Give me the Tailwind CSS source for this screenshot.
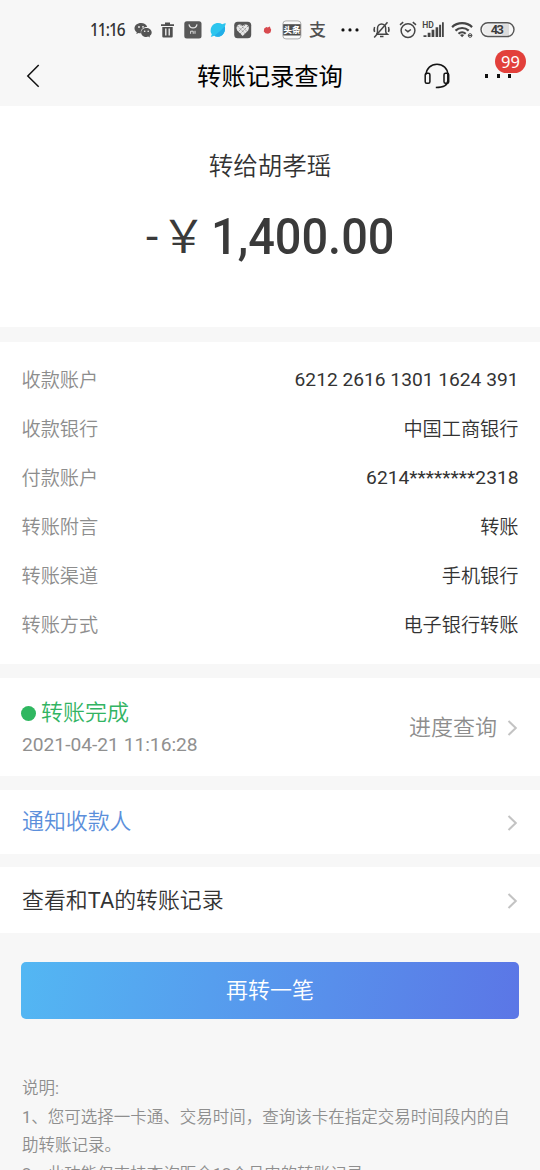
<!DOCTYPE html>
<html lang="zh-CN">
<head>
<meta charset="utf-8">
<title>转账记录查询</title>
<script src="https://cdn.jsdelivr.net/npm/@tailwindcss/browser@4"></script>
</head>
<body class="w-[540px] h-[1170px] overflow-hidden bg-[#f7f7f7] font-[Roboto,'Noto_Sans_CJK_SC_DemiLight','Noto_Sans_CJK_SC_Light','Noto_Sans_CJK_SC',sans-serif] text-[#333] flex flex-col">
<!-- status bar -->
<div class="h-[46px] shrink-0 pt-[14px] flex items-center pl-[90px] text-[#484848]">
  <span class="w-[44px] shrink-0"><span class="inline-block origin-left scale-x-[0.88] font-['Noto_Sans',sans-serif] font-medium text-[17.500px] tracking-[-1.100px] leading-8 text-[#333] whitespace-nowrap -mt-[2px]">11:16</span></span>
  <svg class="w-[18px] h-5 shrink-0" viewBox="0 0 18 20" fill="#555"><path d="M7 3C3.3 3 .5 5.3.5 8.200c0 1.700.9 3 2.300 4L2.300 14l2.300-1.100q1.200.35 2.300.3C6.300 9.500 9.300 7 13.200 7 12.500 4.600 10 3 7 3z"/><path d="M12.400 7.900c-3 0-5.300 2-5.300 4.500s2.300 4.500 5.300 4.500q.9 0 1.800-.3l1.800 1-.4-1.600c1.300-.9 2.100-2.100 2.100-3.600 0-2.500-2.400-4.500-5.300-4.500z"/><g fill="#f7f7f7"><circle cx="5" cy="7" r=".9"/><circle cx="9" cy="6.800" r=".9"/><circle cx="10.700" cy="11.200" r=".8"/><circle cx="14.200" cy="11.200" r=".8"/></g></svg>
  <svg class="w-[15px] h-5 ml-[8px] shrink-0" viewBox="0 0 15 20" fill="#505050"><path d="M1 4.200h4V2.500h5v1.700h4V6H1zM2.300 7h10.400v9.500q0 1-1 1H3.300q-1 0-1-1z"/><path d="M5.800 8.500v7M9.200 8.500v7" stroke="#f7f7f7" stroke-width="1.300"/></svg>
  <svg class="w-[18px] h-5 ml-[9px] shrink-0" viewBox="0 0 18 20"><rect x=".3" y="1.200" width="17.200" height="17.200" rx="2.500" fill="#585858"/><path d="M5 4.300q.5 3.600 4 3.600t4-3.600" fill="none" stroke="#e8e8e8" stroke-width="1.200"/><path d="M6.600 13.800v-2.600h2.600v2.600M11 10.800v3" fill="none" stroke="#ddd"/></svg>
  <svg class="w-[16px] h-5 ml-[8px] shrink-0" viewBox="0 0 16 20"><path d="M15.600 2.900q.2 1.600-.8 3.400C16 11.300 13 16.700 8 16.700q-2.300 0-3.700-1L.8 17l1-2.800C.6 12.600.5 11.500.7 9.700 1 5.600 4.500 3 8 3q2.700 0 4.200 1.200z" fill="#2cc5ee"/><path d="M14.800 6.300Q10 12 4.300 15.700q1.400 1 3.700 1c5 0 8-5.400 6.800-10.400" fill="#22aee8"/></svg>
  <svg class="w-[18px] h-5 ml-[8px] shrink-0" viewBox="0 0 18 20"><rect x=".2" y="1.700" width="17" height="16.600" rx="3.500" fill="#565656"/><path d="M8.700 16 3.200 10.500Q1.700 8 3 5.900 5.700 3.300 8.700 6q3-2.700 5.700-.1 1.300 2.100-.2 4.600z" fill="#e7e7e7"/><path d="m3.500 6 8 8M6.500 5l6.500 6.500M14 6l-8 8M11 5l-6.500 6.500" stroke="#777" stroke-width=".8" stroke-dasharray="1.500 1"/></svg>
  <svg class="w-[9px] h-5 ml-[11px] shrink-0" viewBox="0 0 9 20"><path d="M1.200 8.500 3.400 7l1.300.6L6.900 6.400l.5 1.800.8 1.600-.7 2.600-2.400 1.300-2.700-.4L.8 11.500z" fill="#d84a4f"/></svg>
  <svg class="w-[20px] h-5 ml-[10px] shrink-0" viewBox="0 0 20 20"><rect x=".9" y=".9" width="18" height="18" rx="3" fill="#fafafa" stroke="#999" stroke-width=".8"/><rect x="1.200" y="4.200" width="17.400" height="11.300" fill="#4d4d4d"/><text x="9.900" y="13.200" text-anchor="middle" font-size="8.500" font-weight="900" font-family="Noto Sans CJK SC" fill="#fff">头条</text></svg>
  <span class="w-[18px] ml-[7px] shrink-0 font-['Noto_Sans_CJK_SC'] font-medium text-[17px] leading-5 text-[#505050] -mt-[2px]">支</span>
  <svg class="w-[20px] h-5 ml-[13px] shrink-0" viewBox="0 0 20 20" fill="#111"><circle cx="3" cy="9.900" r="1.600"/><circle cx="10" cy="9.900" r="1.600"/><circle cx="17" cy="9.900" r="1.600"/></svg>
  <svg class="w-[19px] h-5 ml-[12px] shrink-0" viewBox="0 0 19 20" fill="none" stroke="#454545" stroke-width="1.500"><path d="M4.500 14.200h10.700q-1.500-1.200-1.500-3V8.500c0-2.500-1.700-4.400-4.100-4.400S5.500 6 5.500 8.500v2.700q0 1.800-1 3M8 16.600h3.500M2.600 7q-1 2.500 0 5M16.500 7q1 2.500 0 5"/><path d="M2.200 17.500 15.500 2.200"/></svg>
  <svg class="w-[18px] h-5 ml-[8px] shrink-0" viewBox="0 0 18 20" fill="none" stroke="#454545" stroke-width="1.500"><circle cx="9" cy="10.600" r="6.900"/><path d="m1 4.800 3.200-2.600M17 4.800l-3.200-2.600M6 9.500l2.900 2.200 3-2.200"/></svg>
  <svg class="w-[23px] h-5 ml-[5px] shrink-0" viewBox="0 0 23 20" fill="#454545"><text x=".3" y="8" font-size="8.500" font-weight="600" font-family="Roboto" textLength="11.500">HD</text><path d="M1.500 15.200h3v1.900h-3zM5.700 12.800h2.800v4.300H5.700zM9.600 9.800h2.700v7.300H9.600zM13.600 7.300h2.600v9.800h-2.600zM17.100 4.700h2v12.400h-2zM20 2.200h1.800v14.900H20z"/></svg>
  <svg class="w-[23px] h-5 ml-[6px] shrink-0" viewBox="0 0 23 20" fill="none" stroke="#454545" stroke-width="2.200"><path d="M1.100 7.100c5.500-5.200 14.500-5.200 20 0M4.500 10.600c3.800-3.500 9.400-3.500 13.200 0M7.500 13.700c2.100-1.900 5.100-1.900 7.200 0"/><path d="m9 15 2.100 2.300 2.100-2.300q-2.100-1.500-4.200 0z" fill="#454545" stroke="none"/><circle cx="19.100" cy="15.500" r="1.800" stroke-width="1"/><path d="M17.300 15.500h3.500" stroke-width="1"/></svg>
  <svg class="w-[36px] h-5 ml-[6px] shrink-0" viewBox="0 0 36 20"><rect x="1" y="2.700" width="33" height="13.800" rx="6.900" fill="#f7f7f7" stroke="#555" stroke-width="1.400"/><path d="M8.500 4.200h16v10.800h-16q-5.500-1-5.500-5.400t5.500-5.400" fill="#ececec"/><path d="M22 4.200h7v10.800h-7z" fill="#dcdcdc"/><text x="17.300" y="14.200" text-anchor="middle" font-size="12.800" font-weight="700" font-family="Roboto" fill="#3c3c3c" textLength="13">43</text></svg>
</div>
<!-- title bar -->
<header class="h-[60px] shrink-0 relative flex items-center justify-between pl-[25px] pr-[29px]">
  <svg class="w-[16px] h-6" viewBox="0 0 16 24" fill="none" stroke="#111" stroke-width="1.500"><path d="M13.700 1 2.800 12l10.900 10.800"/></svg>
  <h1 class="absolute left-0 top-[13px] w-full text-center font-['Noto_Sans_CJK_SC'] text-[24.300px] font-normal text-black leading-8">转账记录查询</h1>
  <div class="flex items-center">
    <svg class="w-[26px] h-[26px] mr-[35px]" viewBox="0 0 26 26" fill="none" stroke="#151515" stroke-width="1.500"><path d="M2.200 11.500C2.200 5.500 7 1.300 13 1.300s10.800 4.200 10.800 10.200v6c0 4.500-4 7-12 7"/><rect x="1.200" y="10.300" width="4.700" height="10" rx="1.500"/><rect x="20" y="10.300" width="4.700" height="10" rx="1.500"/></svg>
    <div class="relative w-[26px] h-1 flex justify-between"><i class="w-[3px] h-1 bg-[#111]"></i><i class="w-[3px] h-1 bg-[#111]"></i><i class="w-[3px] h-1 bg-[#111]"></i>
      <span class="absolute left-[10px] -top-[24px] w-[31px] h-[23px] rounded-full bg-[#e2403b] text-white text-center font-['Noto_Sans',sans-serif] text-[16.500px] leading-[23px]">99</span>
    </div>
  </div>
</header>
<section class="h-[221px] shrink-0 bg-white flex flex-col items-center">
  <p class="mt-[43px] text-[24.500px] leading-9">转给胡孝瑶</p>
  <div class="mt-[22px] h-[60px] w-[248px] flex items-center text-[#3a3a3a] leading-[60px] whitespace-nowrap">
    <span class="w-[15px] shrink-0 text-[44px] font-normal">-</span><span class="w-[45px] shrink-0 font-['Noto_Sans_CJK_SC'] text-[45px] -mt-[7px]">￥</span><span class="ml-[5px] origin-left scale-x-[0.938] text-[50px] font-medium">1,400.00</span>
  </div>
</section>
<section class="mt-[15px] h-[322px] shrink-0 bg-white px-[21.500px] pt-[14px] text-[19.200px] *:h-[49px] *:flex *:items-center *:justify-between [&_dt]:text-[#8d8d8d] [&_dt]:mt-[2px]">
  <dl><dt>收款账户</dt><dd>6212 2616 1301 1624 391</dd></dl>
  <dl><dt>收款银行</dt><dd class="mt-[2px]">中国工商银行</dd></dl>
  <dl><dt>付款账户</dt><dd>6214********2318</dd></dl>
  <dl><dt>转账附言</dt><dd class="mt-[2px]">转账</dd></dl>
  <dl><dt>转账渠道</dt><dd class="mt-[2px]">手机银行</dd></dl>
  <dl><dt>转账方式</dt><dd class="mt-[2px]">电子银行转账</dd></dl>
</section>
<section class="mt-[14px] h-[98px] shrink-0 bg-white px-[22px] pt-[4px] flex justify-between items-center">
  <div>
    <div class="flex items-center text-[22px] leading-8 text-[#32b463]"><i class="size-[15px] rounded-full bg-[#2fb760] mr-[5px] -ml-px"></i>转账完成</div>
    <div class="text-[19.200px] leading-8 text-[#909090]">2021-04-21 11:16:28</div>
  </div>
  <div class="flex items-center text-[22px] text-[#8d8d8d] -mt-[4px]">进度查询<svg class="w-[11px] h-[18px] ml-[10px] mt-[2px]" viewBox="0 0 11 18" fill="none" stroke="#c3c3c3" stroke-width="2"><path d="m1.500 2 7.300 7-7.300 7"/></svg></div>
</section>
<section class="mt-[14px] h-[64px] shrink-0 bg-white px-[22px] flex justify-between items-center text-[21.900px] text-[#5b8fdb]"><span class="mt-px">通知收款人</span><svg class="w-[11px] h-[18px] mt-[2px]" viewBox="0 0 11 18" fill="none" stroke="#c3c3c3" stroke-width="2"><path d="m1.500 2 7.300 7-7.300 7"/></svg></section>
<section class="mt-[13px] h-[66px] shrink-0 bg-white px-[22px] flex justify-between items-center text-[21.900px]"><span class="mt-[2px]">查看和TA的转账记录</span><svg class="w-[11px] h-[18px] mt-[2px]" viewBox="0 0 11 18" fill="none" stroke="#c3c3c3" stroke-width="2"><path d="m1.500 2 7.300 7-7.300 7"/></svg></section>
<button class="mt-[29px] mx-[21px] w-[498px] h-[57px] shrink-0 rounded-[5px] bg-linear-[100deg] from-[#53b7f3] to-[#5b76e6] text-white text-[22px]">再转一笔</button>
<div class="mt-[56px] px-[22px] shrink-0 text-[16.500px] leading-[28.500px] text-[#8e8e8e]">
  <p>说明:</p>
  <p class="whitespace-nowrap">1、您可选择一卡通、交易时间，查询该卡在指定交易时间段内的自<br>助转账记录。</p>
  <p>2、此功能仅支持查询距今12个月内的转账记录。</p>
</div>
</body>
</html>
